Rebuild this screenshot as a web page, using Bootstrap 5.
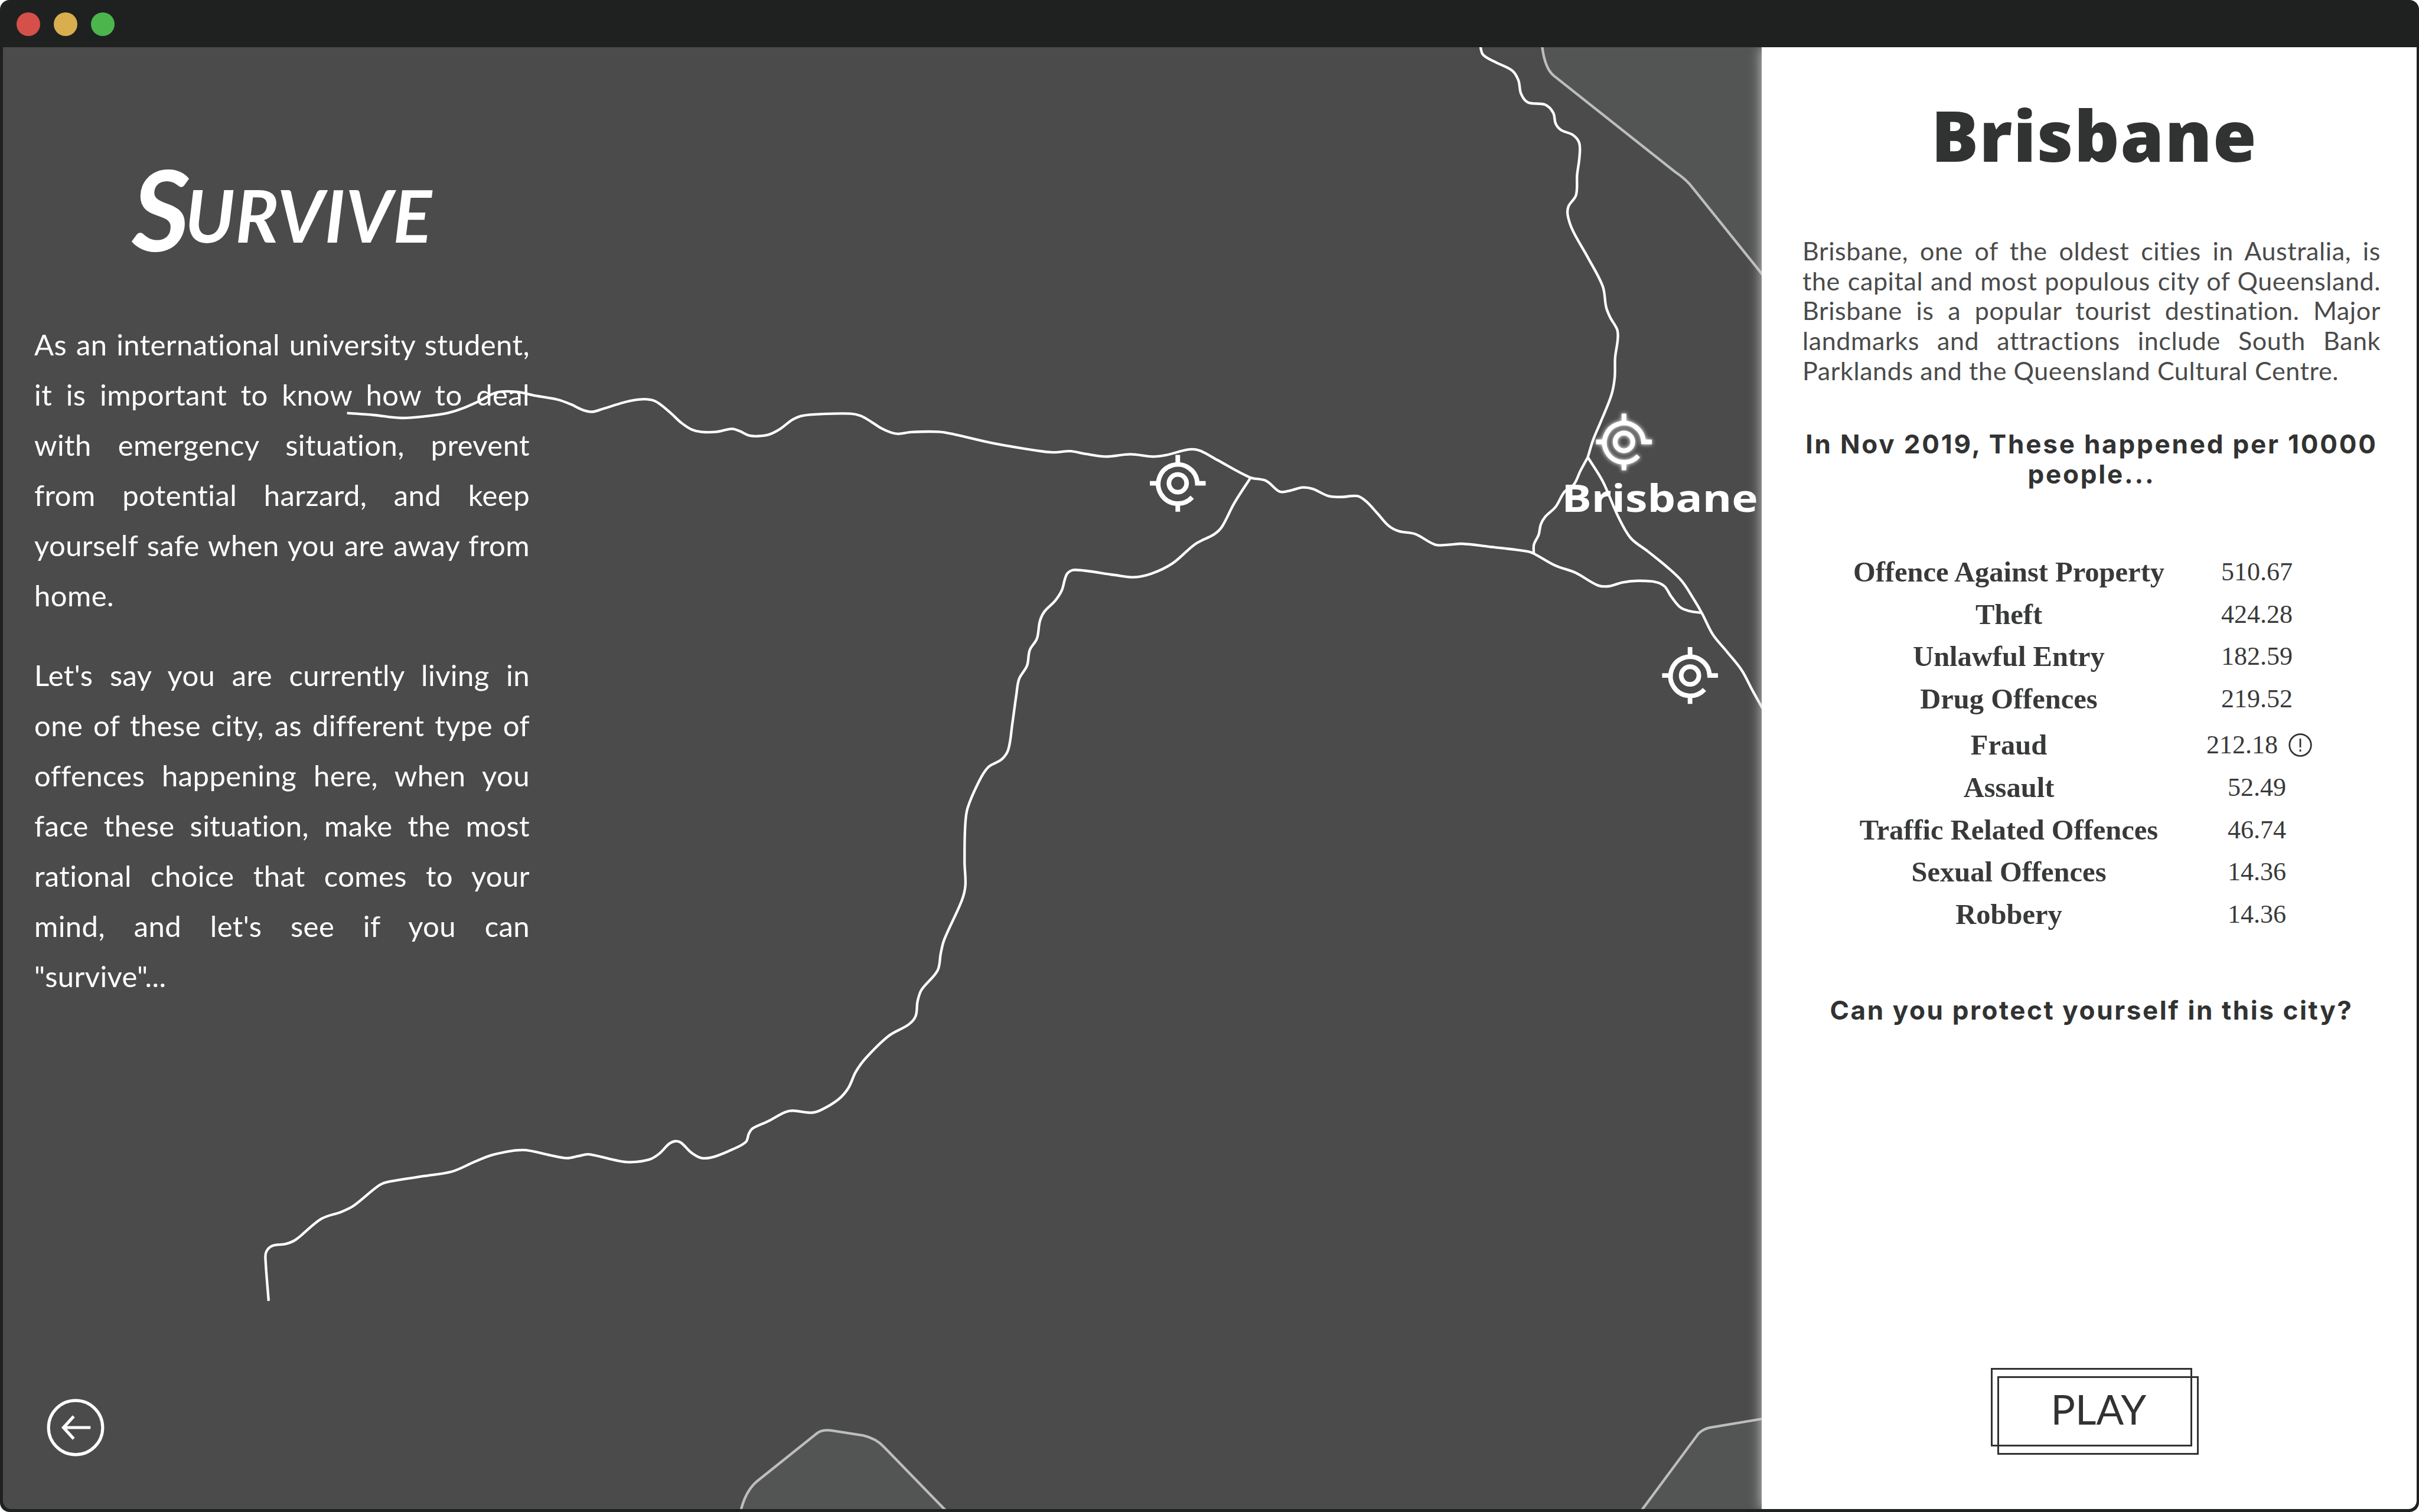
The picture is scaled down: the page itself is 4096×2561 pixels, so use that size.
<!DOCTYPE html>
<html lang="en">
<head>
<meta charset="utf-8">
<title>Survive</title>
<link href="https://cdn.jsdelivr.net/npm/bootstrap@5.3.0/dist/css/bootstrap.min.css" rel="stylesheet">
<style>
html, body { width: 4096px; height: 2561px; overflow: hidden; background: #fff; }
.app-window { width: 4096px; height: 2561px; background: #1f2120; border-radius: 16px; }
.title-strip { height: 80px; padding: 2px 0 0 28px; gap: 23px; flex: none; }
.dot { width: 40px; height: 40px; }
.dot-r { background: #d6504a; } .dot-y { background: #d8ae4e; } .dot-g { background: #4cb54c; }
.app-body { margin: 0 4px 5px 5px; min-height: 0; border-radius: 0 0 14px 14px; background: #4b4b4b; }
.stage { min-width: 0; }
.map-svg { left: 0; top: 0; }
.route { fill: none; stroke: #fff; stroke-width: 5.5; stroke-linejoin: round; }
.land { fill: #535554; stroke: #bdbdbd; stroke-width: 5.5; }
.pin { fill: none; stroke: #fff; stroke-width: 10; }
.pin-glow { filter: drop-shadow(0 0 5px #fff); }
.story { width: 892px; padding-left: 53px; color: #fff; font-family: Lato, sans-serif; font-variant-ligatures: none; }
.brand { padding-top: 186px; margin-bottom: 78px; line-height: 170px; font-size: 190px; font-weight: 700; font-style: italic; white-space: nowrap; letter-spacing: -8px; }
.brand span { font-size: 122px; letter-spacing: 1px; position: relative; top: -14px; }
.story p { font-size: 49px; line-height: 84.9px; margin-bottom: 51px; letter-spacing: .4px; }
.ln { display: block; white-space: nowrap; text-align: justify; text-align-last: justify; }
.ln-end { text-align-last: left; }
.back-btn { left: 74px; bottom: 89px; width: 98px; height: 98px; }
.info { width: 1109px; flex: none; padding: 88px 61px 106px 69px; background: #fff; color: #313332; box-shadow: 0 0 21px #ccc; clip-path: inset(0 0 0 -30px); border-radius: 0 0 14px 0; }
.display-face { font-family: "Open Sans", sans-serif; font-weight: 700; text-align: center; margin: 0; white-space: nowrap; }
.city { font-size: 119px; font-weight: 800; line-height: 120px; letter-spacing: 1.5px; padding-left: 9px; }
.desc { font-family: Lato, sans-serif; font-variant-ligatures: none; font-size: 43px; line-height: 50.9px; letter-spacing: .6px; margin: 111.6px 0 0; color: #4a4b4a; }
.sub { font-family: Inter, sans-serif; font-weight: 700; font-size: 44px; line-height: 51px; margin-top: 73px; letter-spacing: 2.8px; }
.ask { margin-top: 102px; letter-spacing: 2.6px; }
.stats { width: 840px; margin: 104px 0 0 77px; font-family: "Liberation Serif", serif; font-size: 48.5px; line-height: 71.6px; text-align: center; color: #383a39; }
.stats th, .stats td { padding: 0; height: 71.6px; }
.stats th { width: 545px; font-weight: 700; }
.stats td { font-size: 44px; }
.stats .tall > * { padding-top: 6.9px; }
.note-icon { width: 40px; height: 40px; margin: 0 -8px 0 18px; vertical-align: -6px; }
.play { width: 341px; height: 133px; border: 3px solid #313332; border-radius: 0; background: none; font: 400 69px/1 Lato, sans-serif; color: #313332; padding: 6px 0 0 24px; }
.play::after { content: ""; position: absolute; left: 8px; top: 11px; width: 341px; height: 133px; border: 3px solid #313332; }
</style>
</head>
<body>
<div class="app-window d-flex flex-column overflow-hidden">
  <header class="title-strip d-flex align-items-center">
    <span class="dot dot-r rounded-circle"></span><span class="dot dot-y rounded-circle"></span><span class="dot dot-g rounded-circle"></span>
  </header>
  <main class="app-body d-flex flex-grow-1 overflow-hidden">
    <section class="stage flex-grow-1 position-relative">
      <svg class="map-svg position-absolute w-100 h-100" viewBox="6 102 3780 3141" preserveAspectRatio="none">
        <path class="land" d="M3313 90 Q3318 146 3339 163 L3600 370 Q3618 382 3631 396 L3800 606 V80 Z"/>
        <path class="land" d="M1590 3255 Q1600 3205 1627 3183 L1752 3083 Q1764 3071 1786 3074 L1855 3085 Q1882 3091 1900 3110 L2038 3252 Z"/>
        <path class="land" d="M3521 3255 L3650 3081 Q3660 3071 3674 3068 L3800 3047 V3255 Z"/>
        <g id="routes"></g>
        <defs>
          <g id="target">
            <circle r="19"/>
            <path d="M31 30 A42 42 0 1 1 42 0 H60 M-60 0 H-45 M0 -61 V-45 M0 61 V45"/>
          </g>
        </defs>
        <use href="#target" class="pin" x="2531" y="1039"/>
        <g class="pin-glow"><use href="#target" class="pin" x="3490" y="950"/></g>
        <use href="#target" class="pin" x="3632" y="1452"/>
        <text x="3356" y="1100" textLength="422" lengthAdjust="spacingAndGlyphs" font-family="Open Sans, sans-serif" font-weight="700" font-size="82" fill="#fff">Brisbane</text>
      </svg>
      <div class="story position-relative">
        <h1 class="brand text-center">S<span>URVIVE</span></h1>
        <p><span class="ln">As an international university student,</span><span class="ln">it is important to know how to deal</span><span class="ln">with emergency situation, prevent</span><span class="ln">from potential harzard, and keep</span><span class="ln">yourself safe when you are away from</span><span class="ln ln-end">home.</span></p>
        <p><span class="ln">Let's say you are currently living in</span><span class="ln">one of these city, as different type of</span><span class="ln">offences happening here, when you</span><span class="ln">face these situation, make the most</span><span class="ln">rational choice that comes to your</span><span class="ln">mind, and let's see if you can</span><span class="ln ln-end">"survive"...</span></p>
      </div>
      <a class="back-btn position-absolute" href="#" aria-label="Back">
        <svg class="d-block" viewBox="-62 -62 124 124" fill="none" stroke="#fff" stroke-width="6.5"><circle r="58"/><path d="M32 0 H-24 M-4 -24 L-26 0 L-4 24"/></svg>
      </a>
    </section>
    <aside class="info d-flex flex-column position-relative">
      <h2 class="display-face city">Brisbane</h2>
      <p class="desc"><span class="ln">Brisbane, one of the oldest cities in Australia, is</span><span class="ln">the capital and most populous city of Queensland.</span><span class="ln">Brisbane is a popular tourist destination. Major</span><span class="ln">landmarks and attractions include South Bank</span><span class="ln ln-end">Parklands and the Queensland Cultural Centre.</span></p>
      <h3 class="display-face sub">In Nov 2019, These happened per 10000<br>people...</h3>
      <table class="stats">
        <tbody>
          <tr><th>Offence Against Property</th><td>510.67</td></tr>
          <tr><th>Theft</th><td>424.28</td></tr>
          <tr><th>Unlawful Entry</th><td>182.59</td></tr>
          <tr><th>Drug Offences</th><td>219.52</td></tr>
          <tr class="tall"><th>Fraud</th><td>212.18<svg class="note-icon" viewBox="-20 -20 40 40" fill="none" stroke="#313332" stroke-width="2.8"><circle r="18.3"/><path d="M0 -11 V4 M0 7.5 V11"/></svg></td></tr>
          <tr><th>Assault</th><td>52.49</td></tr>
          <tr><th>Traffic Related Offences</th><td>46.74</td></tr>
          <tr><th>Sexual Offences</th><td>14.36</td></tr>
          <tr><th>Robbery</th><td>14.36</td></tr>
        </tbody>
      </table>
      <h3 class="display-face sub ask">Can you protect yourself in this city?</h3>
      <button class="btn play position-relative mt-auto align-self-center">PLAY</button>
    </aside>
  </main>
</div>
<script src="https://cdn.jsdelivr.net/npm/bootstrap@5.3.0/dist/js/bootstrap.bundle.min.js"></script>
<script>
// Map sheets: origin x, origin y, x scale, y scale
const W = [700, 800, 1.0842, 1 / 3], M = [2300, 800, 0.9566, 0.5102], E = [3100, 80, 0.4592, 0.9566],
      C = [1900, 900, 0.574, 0.8291], S = [500, 2000, 1.0842, 0.5421];
// Each road is a list of [sheet, x y x y ...] stretches
const roads = [
  [[W, "42 264 95 277 150 296 200 284 240 265 270 235 300 193 340 130 380 128 415 152 460 178 485 207 510 245 528 256 550 236 590 196 610 181 632 175 650 184 665 213 685 268 705 328 725 370 745 386 775 385 805 366 820 380 838 408 855 413 878 403 900 368 925 307 945 281 985 270 1040 268 1060 282 1080 318 1100 360 1120 389 1135 398 1160 387 1215 385 1245 401 1325 460 1420 511 1445 517"],
   [M, "0 333 35 345 80 356 135 346 185 356 215 350 265 326 290 330 330 370 403 443 440 458 470 503 490 501 522 486 545 492 580 522 610 526 645 522 665 545 690 595 715 647 738 670 775 682 820 727 850 727 880 723 940 735 1030 756 1045 768 1090 815 1135 845 1185 898 1210 902 1240 886 1275 879 1315 884 1335 902 1350 945 1370 990 1390 1006 1418 1014"]],
  [[E, "176 18 190 40 250 57 325 75 355 97 368 128 400 147 480 152 518 170 530 195 555 209 610 220 640 238 641 270 630 310 625 355 590 380 586 400 610 435 680 495 750 560 766 607 785 630 818 658 820 680 808 720 806 765 790 805 740 865 705 905 680 944"]],
  [[E, "680 944 645 975 615 1005 570 1022 530 1055 480 1078 460 1095 450 1118 428 1140 427 1160"]],
  [[E, "680 944 750 998 820 1075 880 1125 960 1155 1050 1190 1120 1222 1175 1262 1215 1295 1265 1342 1330 1380 1400 1422 1450 1467 1500 1510"]],
  [[C, "1372 153 1310 220 1265 280 1235 300 1165 325 1080 375 1000 402 935 411 860 405 715 392 685 402 665 445 640 472 600 500 583 525 572 570 545 600 535 640 505 675 495 715 480 790 465 857 440 883 390 903 355 940 312 1010 303 1060 301 1150 304 1210 290 1250 225 1350 212 1385 200 1430 140 1480 125 1510 118 1548"],
   [S, "1340 372 1300 418 1255 505 1235 560 1220 625 1200 670 1165 712 1145 722 1110 714 1095 720 1060 757 1030 785 1023 805 1017 838 990 868 955 896 930 902 910 882 888 840 877 835 865 845 845 885 825 908 790 918 765 913 705 887 685 894 662 902 630 891 575 870 515 889 480 916 435 955 380 973 310 995 290 1010 240 1090 215 1115 175 1143 125 1225 105 1242 78 1250 66 1275 65 1310 71 1468"]]
];
const layer = document.getElementById("routes");
for (const road of roads) {
  const p = [];
  for (const [[ox, oy, sx, sy], list] of road) {
    const n = list.split(" ").map(Number);
    for (let i = 0; i < n.length; i += 2) p.push([ox + n[i] * sx, oy + n[i + 1] * sy]);
  }
  // Smooth curve through every point; handles are a third of each step
  let d = `M${p[0]}`;
  const tan = i => { const a = p[Math.max(i - 1, 0)], b = p[Math.min(i + 1, p.length - 1)], l = Math.hypot(b[0] - a[0], b[1] - a[1]) || 1; return [(b[0] - a[0]) / l, (b[1] - a[1]) / l]; };
  for (let i = 0; i < p.length - 1; i++) {
    const a = p[i], b = p[i + 1], k = Math.hypot(b[0] - a[0], b[1] - a[1]) / 3, s = tan(i), t = tan(i + 1);
    d += `C${a[0] + s[0] * k} ${a[1] + s[1] * k} ${b[0] - t[0] * k} ${b[1] - t[1] * k} ${b}`;
  }
  const el = document.createElementNS("http://www.w3.org/2000/svg", "path");
  el.setAttribute("class", "route"); el.setAttribute("d", d); layer.append(el);
}
</script>
</body>
</html>
